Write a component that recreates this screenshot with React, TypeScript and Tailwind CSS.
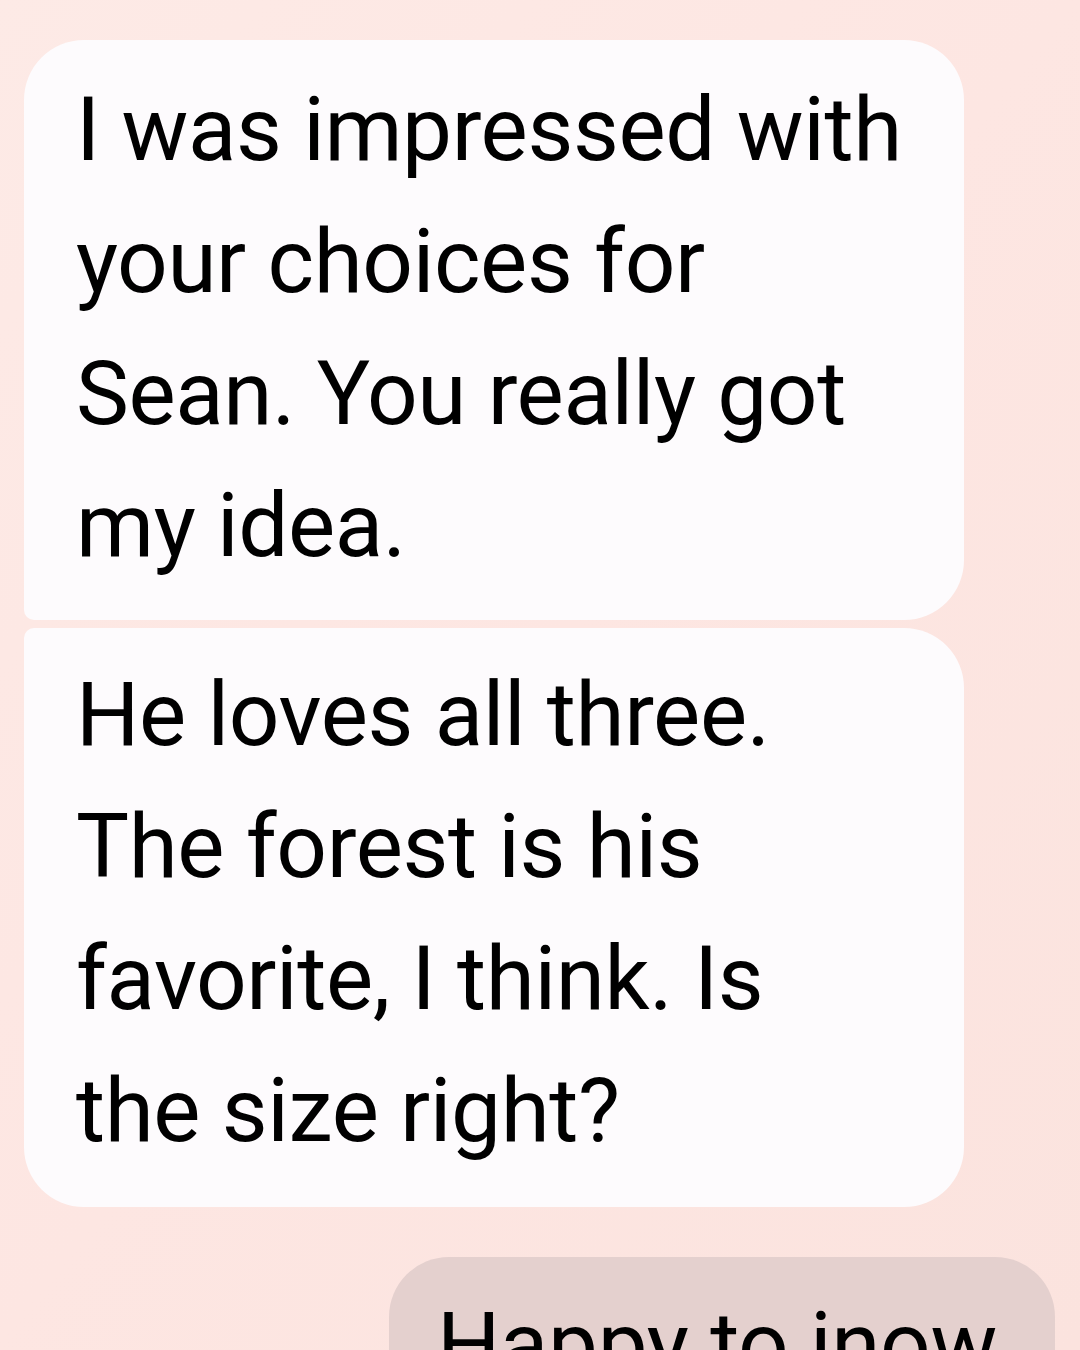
export default function App() {
  return (
    <div className="w-[1080px] h-[1350px] overflow-hidden bg-gradient-to-br from-[#fdeae6] via-[#fde6e2] to-[#fbe3de] text-black" style={{ fontFamily: "Roboto, 'Noto Sans', sans-serif" }}>
      <div className="flex flex-col pt-[40px] pl-[24px] pr-[25px]">
        <div className="w-[940px] h-[580px] bg-[#fdfbfd] rounded-[60px] rounded-bl-[10px] pl-[52px] pt-[24px]">
          <p className="text-[89px] leading-[132px] tracking-[-0.4px] w-[840px]">
            I was impressed with your choices for Sean. You really got my idea.
          </p>
        </div>
        <div className="mt-[8px] w-[940px] h-[579px] bg-[#fdfbfd] rounded-[60px] rounded-tl-[10px] pl-[52px] pt-[21px]">
          <p className="text-[89px] leading-[132px] tracking-[-0.4px] w-[800px]">
            He loves all three. The forest is his favorite, I think. Is the size right?
          </p>
        </div>
        <div className="mt-[50px] ml-auto w-[666px] h-[200px] bg-[#e4d0ce] rounded-[60px] pl-[48px] pt-[22px]">
          <p className="text-[89px] leading-[132px] tracking-[-0.4px] whitespace-nowrap">Happy to inow</p>
        </div>
      </div>
    </div>
  );
}
